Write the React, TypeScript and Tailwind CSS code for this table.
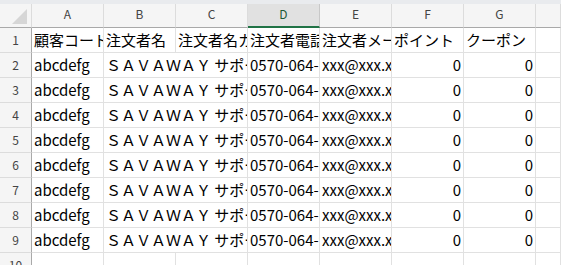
const cols = ["A", "B", "C", "D", "E", "F", "G", ""];

const headerRow = [
  "顧客コード",
  "注文者名",
  "注文者名カナ",
  "注文者電話番号",
  "注文者メールアドレス",
  "ポイント",
  "クーポン",
  "",
];

const rows = Array.from({ length: 8 }, (_, i) => i + 2);

const cell =
  "h-[25px] border-r border-b border-[#e1e1e1] overflow-hidden whitespace-nowrap flex items-center pt-[1px] px-[2px] text-[15px] text-black";

function RowHead({ n }: { n: number }) {
  return (
    <div className="h-[25px] border-r border-r-[#a9a9a9] border-b border-b-[#dcdcdc] bg-[#f5f5f5] flex items-center justify-center text-[12px] text-[#444]">
      {n}
    </div>
  );
}

export default function App() {
  return (
    <div
      className="w-[561px] h-[265px] overflow-hidden bg-white"
      style={{ fontFamily: '"Noto Sans CJK JP", "Noto Sans", sans-serif' }}
    >
      <div className="h-[4px] bg-[#e9ebee]" />
      <div className="grid grid-cols-[32px_repeat(7,72px)_1fr]">
        {/* column headers */}
        <div className="h-[24px] bg-[#f5f5f5] border-r border-r-[#dcdcdc] border-b border-b-[#a9a9a9] flex items-end justify-end pr-[4px] pb-[3px]">
          <svg width="15" height="15" viewBox="0 0 15 15">
            <polygon points="15,0 15,15 0,15" fill="#d6d6d6" />
          </svg>
        </div>
        {cols.map((c) =>
          c === "D" ? (
            <div
              key={c}
              className="h-[24px] bg-[#e1e1e1] border-r border-r-[#c8c8c8] border-b-2 border-b-[#217346] flex items-center justify-center pb-[2px] text-[12px] text-[#1e5a37]"
            >
              {c}
            </div>
          ) : (
            <div
              key={c || "h"}
              className="h-[24px] bg-[#f5f5f5] border-r border-r-[#dcdcdc] border-b border-b-[#a9a9a9] flex items-center justify-center pb-[3px] text-[12px] text-[#444]"
            >
              {c}
            </div>
          )
        )}

        {/* row 1 */}
        <RowHead n={1} />
        {headerRow.map((t, i) => (
          <div key={i} className={cell}>
            {t}
          </div>
        ))}

        {/* rows 2-9 */}
        {rows.map((n) => (
          <div key={n} className="contents">
            <RowHead n={n} />
            <div className={cell}>abcdefg</div>
            <div className={`${cell} col-span-2`}>ＳＡＶＡＷＡＹ サポート</div>
            <div className={cell}>0570-064-999</div>
            <div className={cell}>xxx@xxx.xxx</div>
            <div className={`${cell} justify-end`}>0</div>
            <div className={`${cell} justify-end`}>0</div>
            <div className={cell} />
          </div>
        ))}

        {/* row 10 */}
        <RowHead n={10} />
        {cols.map((c, i) => (
          <div key={i} className={cell} />
        ))}
      </div>
    </div>
  );
}
